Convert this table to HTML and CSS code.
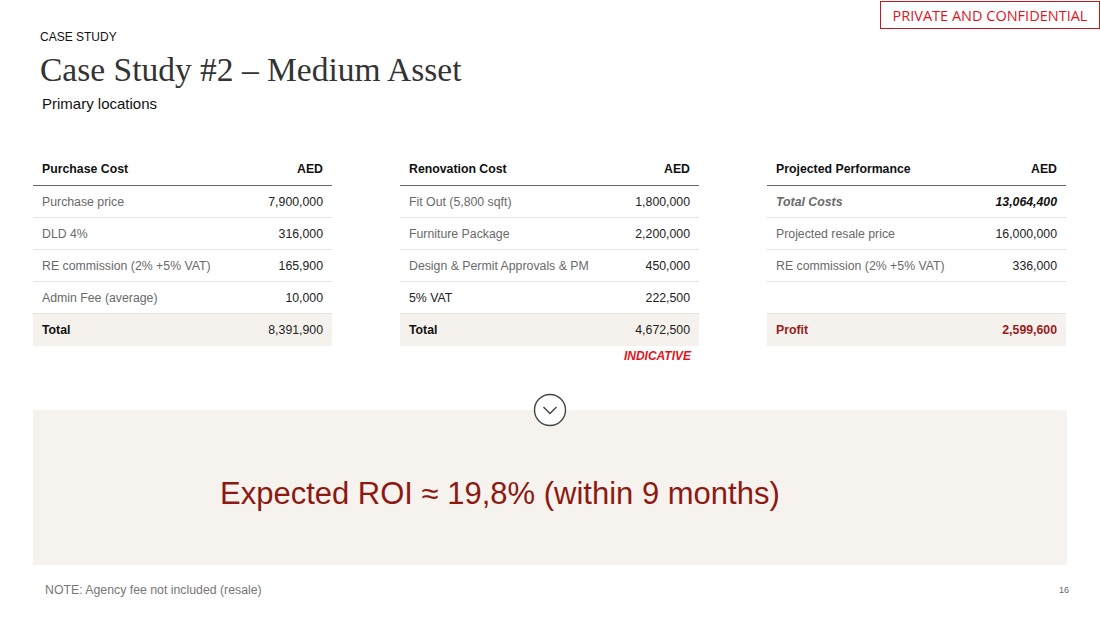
FILE: index.html
```html
<!DOCTYPE html>
<html>
<head>
<meta charset="utf-8">
<link rel="stylesheet" href="styles.css">
</head>
<body>
<div class="slide">
  <div class="confidential">PRIVATE AND CONFIDENTIAL</div>
  <header class="head">
    <div class="kicker">CASE STUDY</div>
    <h1 class="title">Case Study #2 – Medium Asset</h1>
    <div class="subtitle">Primary locations</div>
  </header>

  <section class="tables">
    <div class="tbl">
      <div class="row hdr"><span>Purchase Cost</span><span>AED</span></div>
      <div class="row"><span class="lbl">Purchase price</span><span class="num">7,900,000</span></div>
      <div class="row"><span class="lbl">DLD 4%</span><span class="num">316,000</span></div>
      <div class="row"><span class="lbl">RE commission (2% +5% VAT)</span><span class="num">165,900</span></div>
      <div class="row"><span class="lbl">Admin Fee (average)</span><span class="num">10,000</span></div>
      <div class="row total"><span class="tl">Total</span><span class="num">8,391,900</span></div>
    </div>
    <div class="tbl">
      <div class="row hdr"><span>Renovation Cost</span><span>AED</span></div>
      <div class="row"><span class="lbl">Fit Out (5,800 sqft)</span><span class="num">1,800,000</span></div>
      <div class="row"><span class="lbl">Furniture Package</span><span class="num">2,200,000</span></div>
      <div class="row"><span class="lbl">Design &amp; Permit Approvals &amp; PM</span><span class="num">450,000</span></div>
      <div class="row"><span class="lbl dark">5% VAT</span><span class="num">222,500</span></div>
      <div class="row total"><span class="tl">Total</span><span class="num">4,672,500</span></div>
      <div class="indicative">INDICATIVE</div>
    </div>
    <div class="tbl">
      <div class="row hdr"><span>Projected Performance</span><span>AED</span></div>
      <div class="row"><span class="lbl bi">Total Costs</span><span class="num bi dk">13,064,400</span></div>
      <div class="row"><span class="lbl">Projected resale price</span><span class="num">16,000,000</span></div>
      <div class="row"><span class="lbl">RE commission (2% +5% VAT)</span><span class="num">336,000</span></div>
      <div class="row blank"></div>
      <div class="row total profit"><span class="tl">Profit</span><span class="num">2,599,600</span></div>
    </div>
  </section>

  <section class="panel">
    <div class="chev">
      <svg width="34" height="34" viewBox="0 0 34 34">
        <circle cx="17" cy="17" r="15.5" fill="#fff" stroke="#444" stroke-width="1.4"/>
        <path d="M10.5 14 L17 20.5 L23.5 14" fill="none" stroke="#444" stroke-width="1.4"/>
      </svg>
    </div>
    <div class="roi">Expected ROI ≈ 19,8% (within 9 months)</div>
  </section>

  <footer class="foot">
    <span class="note">NOTE: Agency fee not included (resale)</span>
    <span class="page">16</span>
  </footer>
</div>
</body>
</html>
```

FILE: styles.css
```css
* { box-sizing: border-box; }
html, body { margin: 0; padding: 0; background: #fff; }
body { width: 1100px; height: 619px; overflow: hidden; font-family: "Liberation Sans", Arial, sans-serif; }

.slide { position: relative; width: 1100px; height: 619px; display: flex; flex-direction: column; }

.confidential {
  position: absolute; top: 1px; right: 0; width: 220px; height: 28px;
  border: 1px solid #c8161e; color: #e0141e;
  font-family: "Open Sans", "Noto Sans", sans-serif; font-size: 14.5px;
  display: flex; align-items: center; justify-content: center; padding-top: 1px;
}

.head { padding: 30px 0 0 40px; }
.kicker { font-size: 12px; line-height: 14px; color: #111; }
.title { margin: 7px 0 0 0; font-family: "Liberation Serif", "Times New Roman", serif; font-weight: normal; font-size: 33.5px; line-height: 38px; color: #333; }
.subtitle { margin: 6px 0 0 2px; font-size: 15px; line-height: 18px; color: #111; }

.tables { display: grid; grid-template-columns: 299px 299px 299px; column-gap: 68px; margin: 40px 0 0 33px; }
.tbl { display: flex; flex-direction: column; }
.row { display: flex; justify-content: space-between; align-items: center; height: 32px; padding: 0 9px; font-size: 12.3px; border-bottom: 1px solid #e3e3e3; color: #222; }
.row.hdr { height: 33px; font-weight: bold; color: #111; border-bottom: 1px solid #666; }
.lbl { color: #6a6a6a; }
.lbl.dark { color: #222; }
.num { color: #222; }
.bi { font-weight: bold; font-style: italic; }
.lbl.bi { color: #6a6a6a; }
.num.dk { color: #111; }
.row.total { background: #f5f2ee; border-bottom: none; }
.tl { font-weight: bold; color: #111; }
.row.profit .tl, .row.profit .num { color: #9a1b1b; font-weight: bold; }
.indicative { text-align: right; padding: 3px 8px 0 0; font-size: 12px; font-weight: bold; font-style: italic; color: #e0141e; }

.panel { position: relative; margin: 47px 33px 0 33px; height: 155px; background: #f6f3ef; }
.chev { position: absolute; left: 500px; top: -17px; width: 34px; height: 34px; }
.chev svg { display: block; }
.roi { padding: 66px 0 0 187px; font-size: 31px; line-height: 36px; color: #8c1a12; }

.foot { display: flex; justify-content: space-between; align-items: center; padding: 18px 31px 0 45px; }
.note { font-size: 12.3px; color: #777; }
.page { font-size: 9px; color: #666; }
```
